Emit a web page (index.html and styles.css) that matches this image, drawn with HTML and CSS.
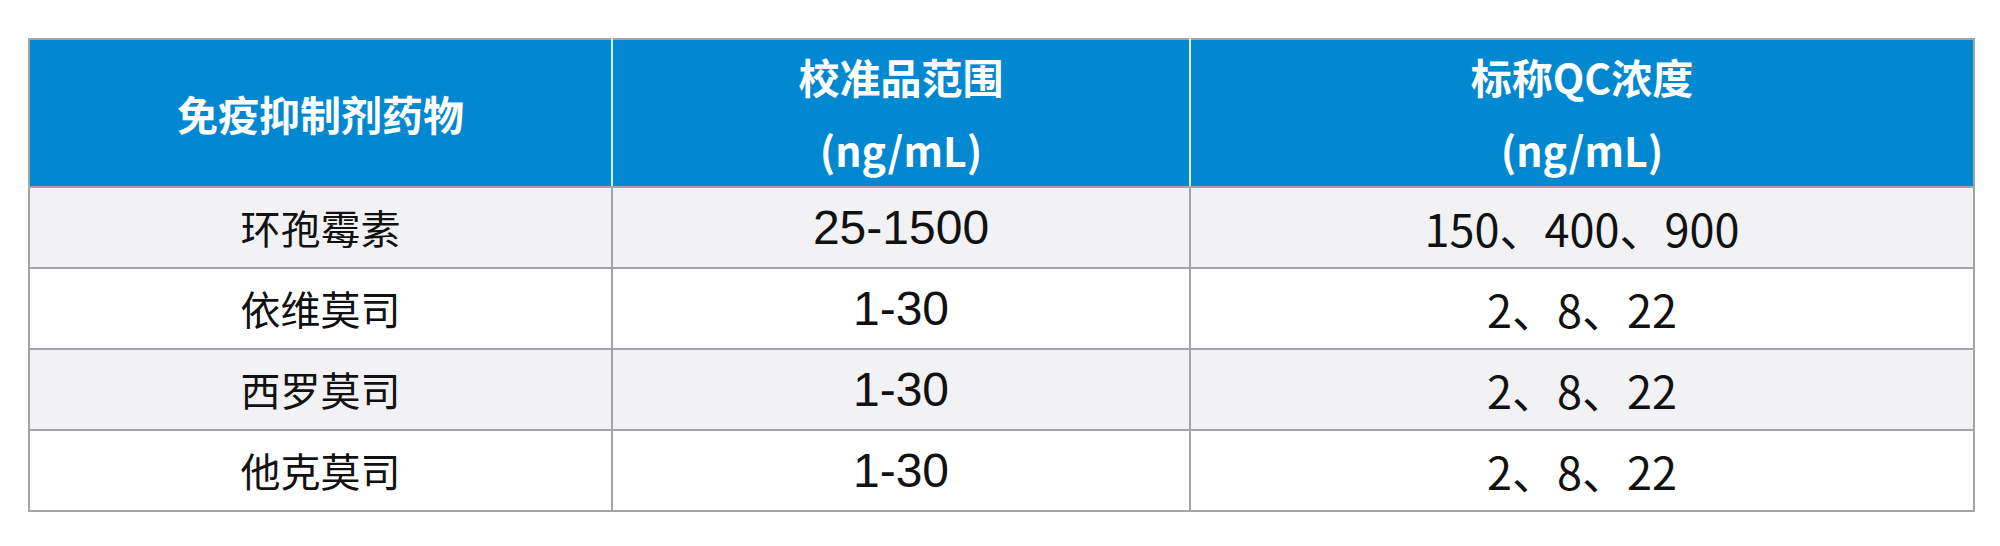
FILE: index.html
```html
<!DOCTYPE html>
<html lang="zh-CN">
<head>
<meta charset="utf-8">
<title>免疫抑制剂药物</title>
<link rel="stylesheet" href="styles.css">
</head>
<body>
<table class="grid">
  <colgroup>
    <col class="c1"><col class="c2"><col class="c3">
  </colgroup>
  <thead>
    <tr>
      <th>免疫抑制剂药物</th>
      <th>校准品范围<br>(ng/mL)</th>
      <th>标称QC浓度<br>(ng/mL)</th>
    </tr>
  </thead>
  <tbody>
    <tr class="alt">
      <td class="name">环孢霉素</td>
      <td class="range">25-1500</td>
      <td class="qc">150、400、900</td>
    </tr>
    <tr>
      <td class="name">依维莫司</td>
      <td class="range">1-30</td>
      <td class="qc">2、8、22</td>
    </tr>
    <tr class="alt">
      <td class="name">西罗莫司</td>
      <td class="range">1-30</td>
      <td class="qc">2、8、22</td>
    </tr>
    <tr>
      <td class="name">他克莫司</td>
      <td class="range">1-30</td>
      <td class="qc">2、8、22</td>
    </tr>
  </tbody>
</table>
</body>
</html>
```

FILE: styles.css
```css
html, body {
  margin: 0;
  padding: 0;
  background: #ffffff;
}

body {
  padding: 38px 0 0 28px;
  font-family: "Noto Sans CJK SC", "Noto Sans", sans-serif;
}

.grid {
  border-collapse: collapse;
  width: 1945px;
  table-layout: fixed;
}

.c1 { width: 583px; }
.c2 { width: 578px; }
.c3 { width: 784px; }

.grid th,
.grid td {
  border: 2px solid #a2a4a7;
  padding: 0;
  text-align: center;
  vertical-align: middle;
}

.grid th {
  background: #0288d1;
  color: #ffffff;
  font-weight: 700;
  font-size: 41px;
  line-height: 73px;
  height: 146px;
}

.grid th:not(:last-child) {
  border-right-color: #d2f1fb;
}

.grid td {
  height: 79px;
  color: #111111;
  background: #ffffff;
}

.grid tr.alt td {
  background: #f2f2f4;
}

.name {
  font-size: 40px;
  font-weight: 400;
  line-height: 79px;
}

.range {
  font-family: "Liberation Sans", Arial, sans-serif;
  font-size: 48px;
  line-height: 79px;
}

.qc {
  font-family: "Noto Sans CJK SC", sans-serif;
  font-size: 45px;
  line-height: 79px;
}
```
